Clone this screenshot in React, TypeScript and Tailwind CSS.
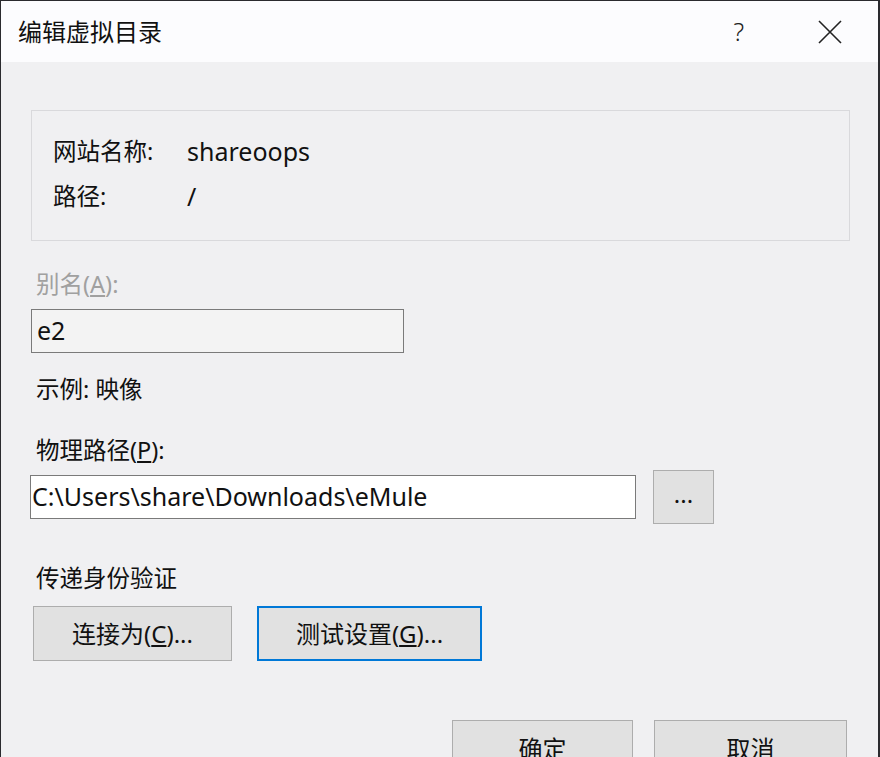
import React from 'react';

const ui = { fontFamily: '"Noto Sans", "Noto Sans CJK SC", sans-serif' };

function Btn({
  children,
  className = '',
  focused = false,
}: {
  children: React.ReactNode;
  className?: string;
  focused?: boolean;
}) {
  return (
    <div
      className={`flex items-center justify-center bg-[#e1e1e1] text-[24px] text-[#111] ${
        focused ? 'border-2 border-[#0078d7]' : 'border border-[#adadad]'
      } ${className}`}
    >
      {children}
    </div>
  );
}

function Label({ children, className = '' }: { children: React.ReactNode; className?: string }) {
  return <div className={`h-[30px] pl-[35px] text-[23.5px] leading-[30px] ${className}`}>{children}</div>;
}

export default function App() {
  return (
    <div
      style={ui}
      className="flex h-[757px] w-[880px] flex-col overflow-hidden border-t border-r-2 border-l border-[#2a2a2e] bg-[#f0f0f2] text-[#111] *:shrink-0"
    >
      {/* title bar */}
      <div className="flex h-[61px] items-center bg-[#fcfcfe] pl-[17px]">
        <span className="text-[24px]">编辑虚拟目录</span>
        <span className="ml-auto mr-[74px] text-[25px] font-light text-[#222]">?</span>
        <svg width="24" height="24" viewBox="0 0 24 24" className="mr-[36px]">
          <path d="M1 1L23 23M23 1L1 23" stroke="#222" strokeWidth="1.6" fill="none" />
        </svg>
      </div>

      {/* site group */}
      <div className="mt-[48px] ml-[30px] flex h-[131px] w-[819px] flex-col border border-[#d9d9dc] pt-[26px] pl-[21px] text-[23.5px]">
        <div className="flex h-[30px] items-center">
          <span className="w-[134px]">网站名称:</span>
          <span className="text-[25px]">shareoops</span>
        </div>
        <div className="mt-[15px] flex h-[30px] items-center">
          <span className="w-[134px]">路径:</span>
          <span className="text-[25px]">/</span>
        </div>
      </div>

      <Label className="mt-[28px] text-[#a0a0a0]">
        别名(<span className="underline underline-offset-2">A</span>):
      </Label>
      <div className="mt-[10px] ml-[30px] flex h-[44px] w-[373px] items-center border border-[#7a7a7a] bg-[#f3f3f3] pl-[5px] text-[25px]">
        e2
      </div>

      <Label className="mt-[21px]">示例: 映像</Label>

      <Label className="mt-[31px]">
        物理路径(<span className="underline underline-offset-2">P</span>):
      </Label>
      <div className="mt-[5px] ml-[29px] flex h-[54px] items-center gap-[17px]">
        <div className="flex h-[44px] w-[606px] items-center border border-[#7a7a7a] bg-white pl-[1px] text-[25px]">
          C:\Users\share\Downloads\eMule
        </div>
        <Btn className="h-[54px] w-[61px] pb-[6px] text-[18px]">...</Btn>
      </div>

      <Label className="mt-[39px]">传递身份验证</Label>
      <div className="mt-[13px] ml-[32px] flex gap-[25px]">
        <Btn className="h-[55px] w-[199px]">
          连接为(<span className="underline underline-offset-2">C</span>)...
        </Btn>
        <Btn focused className="h-[55px] w-[225px]">
          测试设置(<span className="underline underline-offset-2">G</span>)...
        </Btn>
      </div>

      <div className="mt-[59px] flex justify-end gap-[21px] pr-[31px]">
        <Btn className="h-[55px] w-[181px] pt-[2px]">确定</Btn>
        <Btn className="h-[55px] w-[193px] pt-[2px]">取消</Btn>
      </div>
    </div>
  );
}
